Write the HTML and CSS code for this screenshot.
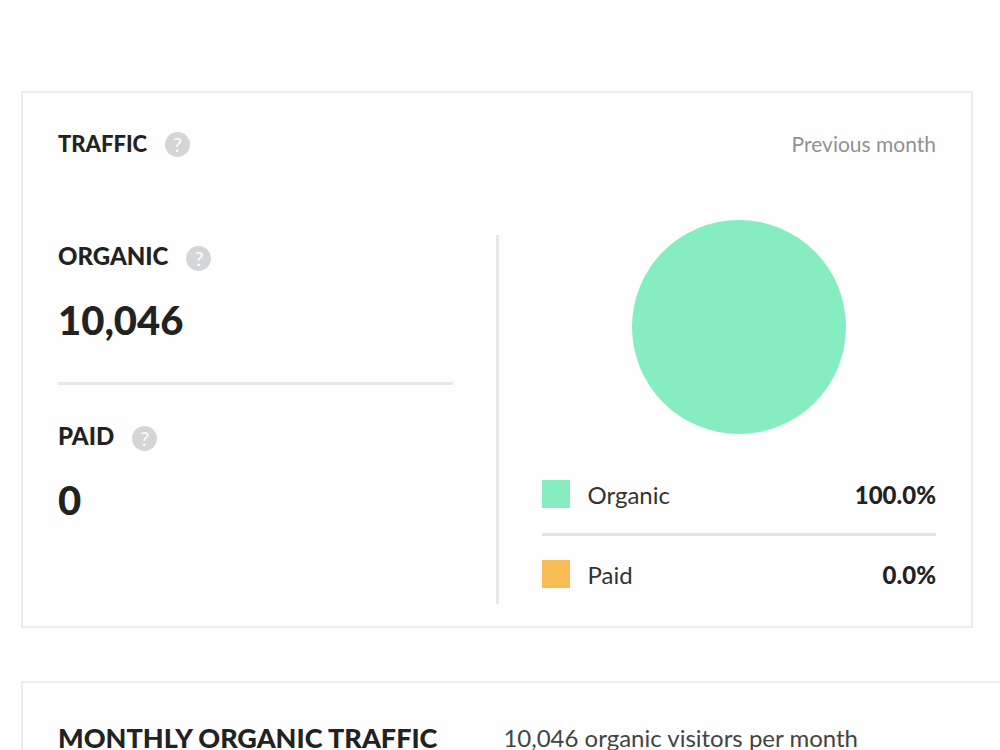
FILE: index.html
```html
<!DOCTYPE html>
<html lang="en">
<head>
<meta charset="utf-8">
<meta name="viewport" content="width=device-width, initial-scale=1">
<title>Traffic overview</title>
<link rel="stylesheet" href="styles.css">
</head>
<body>
<main class="page">
  <section class="card traffic">
    <header class="card-header">
      <h2 class="card-title">Traffic</h2>
      <button class="help" type="button" aria-label="About traffic">?</button>
      <span class="period">Previous month</span>
    </header>
    <div class="columns">
      <div class="stats">
        <div class="stat">
          <div class="stat-head">
            <h3 class="label">Organic</h3>
            <button class="help" type="button" aria-label="About organic traffic">?</button>
          </div>
          <p class="value">10,046</p>
        </div>
        <div class="stat">
          <div class="stat-head">
            <h3 class="label">Paid</h3>
            <button class="help" type="button" aria-label="About paid traffic">?</button>
          </div>
          <p class="value">0</p>
        </div>
      </div>
      <div class="divider"></div>
      <div class="chart">
        <svg class="pie" viewBox="0 0 214 214" role="img" aria-label="Organic 100%, paid 0%"><circle cx="107" cy="107" r="107"/></svg>
        <ul class="legend">
          <li class="legend-row"><span class="swatch organic"></span><span class="name">Organic</span><strong class="share">100.0%</strong></li>
          <li class="legend-row"><span class="swatch paid"></span><span class="name">Paid</span><strong class="share">0.0%</strong></li>
        </ul>
      </div>
    </div>
  </section>
  <section class="card monthly">
    <h2 class="monthly-title">Monthly organic traffic</h2>
    <p class="monthly-note">10,046 organic visitors per month</p>
  </section>
</main>
</body>
</html>
```

FILE: styles.css
```css
* { box-sizing: border-box; }
body {
  margin: 0;
  background: #fefefe;
  color: #222;
  font-family: Lato, "Open Sans", sans-serif;
}
h2, h3, p, ul { margin: 0; padding: 0; }
.page {
  display: flex;
  flex-direction: column;
  gap: 53px;
  height: 100vh;
  padding: 91px 0 0 21px;
  overflow: hidden;
}
.card {
  flex: none;
  border: 2px solid #ebedee;
  padding: 35px;
}
.traffic { margin-right: 27px; padding-bottom: 22px; }
.card-header, .stat-head {
  display: flex;
  align-items: center;
  height: 32px;
  gap: 18px;
}
.card-header { margin-bottom: 60px; }
.card-title, .label {
  font-size: 24px;
  font-weight: 900;
  line-height: 32px;
  text-transform: uppercase;
}
.card-title { font-size: 22px; }
.help {
  display: flex;
  align-items: center;
  justify-content: center;
  width: 25px;
  height: 25px;
  padding: 0;
  border: 0;
  border-radius: 50%;
  background: #d3d5d7;
  color: #fff;
  font: 400 20px/25px Lato, sans-serif;
}
.stat-head .help { margin-top: 4px; }
.period {
  margin-left: auto;
  color: #929292;
  font-size: 21px;
  line-height: 32px;
}
.columns {
  display: grid;
  grid-template-columns: 1fr 3px 1fr;
  column-gap: 43px;
}
.stats { padding-top: 20px; }
.stat + .stat {
  margin-top: 37px;
  padding-top: 35px;
  border-top: 3px solid #e6e9ea;
}
.value {
  margin-top: 24px;
  padding-bottom: 1px;
  font-size: 40px;
  font-weight: 900;
  line-height: 48px;
}
.divider { margin-top: 15px; background: #e6e8eb; }
.chart { padding-bottom: 8px; }
.pie {
  display: block;
  width: 214px;
  height: 214px;
  margin: 0 auto 38px;
  fill: #86edc1;
}
.legend { list-style: none; }
.legend-row {
  display: flex;
  align-items: center;
  gap: 18px;
  height: 44px;
  font-size: 24px;
}
.legend-row + .legend-row {
  height: 63px;
  margin-top: 17px;
  border-top: 3px solid #e0e4e3;
  padding-top: 16px;
}
.swatch { width: 28px; height: 28px; }
.organic { background: #86edc1; }
.paid { background: #f8bc55; }
.name { color: #333; }
.share { margin-left: auto; font-weight: 900; }
.monthly {
  display: flex;
  align-items: center;
  gap: 66px;
  border-right: 0;
  white-space: nowrap;
}
.monthly-title {
  font-size: 27px;
  font-weight: 900;
  line-height: 40px;
  text-transform: uppercase;
}
.monthly-note { color: #444; font-size: 24px; line-height: 40px; }
```
